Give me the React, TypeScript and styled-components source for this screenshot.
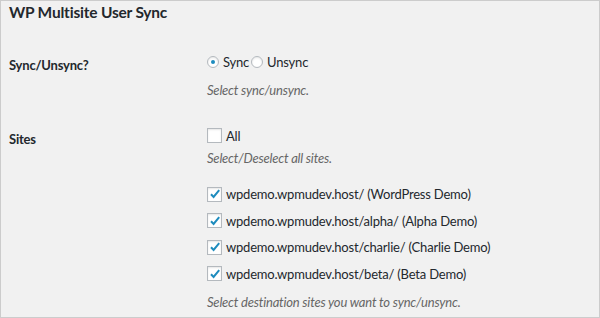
import React from 'react';
import styled, { createGlobalStyle } from 'styled-components';

const GlobalStyle = createGlobalStyle`
	html, body {
		margin: 0;
		padding: 0;
		background: #f1f1f1;
	}
	* {
		box-sizing: border-box;
	}
`;

const SITES = [
	{ url: 'wpdemo.wpmudev.host/', name: 'WordPress Demo' },
	{ url: 'wpdemo.wpmudev.host/alpha/', name: 'Alpha Demo' },
	{ url: 'wpdemo.wpmudev.host/charlie/', name: 'Charlie Demo' },
	{ url: 'wpdemo.wpmudev.host/beta/', name: 'Beta Demo' },
];

const CheckMark = () => (
	<svg width="12" height="12" viewBox="0 0 12 12">
		<path d="M2 6.2 L4.6 9 L10.2 2.2" fill="none" stroke="#1e8cbe" strokeWidth="2" />
	</svg>
);

const App = () => (
	<>
		<GlobalStyle />
		<Frame>
			<Title>WP Multisite User Sync</Title>
			<FormRow top={30}>
				<Label>Sync/Unsync?</Label>
				<Field>
					<Inline>
						<Option>
							<Radio checked />
							Sync
						</Option>
						<Option>
							<Radio />
							Unsync
						</Option>
					</Inline>
					<Description gap={8}>Select sync/unsync.</Description>
				</Field>
			</FormRow>
			<FormRow top={25.5}>
				<Label>Sites</Label>
				<Field>
					<Option>
						<Checkbox />
						All
					</Option>
					<Description gap={2}>Select/Deselect all sites.</Description>
					<SiteList>
						{SITES.map((site) => (
							<SiteItem key={site.url}>
								<Checkbox>
									<CheckMark />
								</Checkbox>
								{site.url} ({site.name})
							</SiteItem>
						))}
					</SiteList>
					<Description gap={8.5}>Select destination sites you want to sync/unsync.</Description>
				</Field>
			</FormRow>
		</Frame>
	</>
);

const Frame = styled.div`
	width: 600px;
	height: 318px;
	border: 1px solid #cccccc;
	background: #f1f1f1;
	padding: 1px 8px 0;
	font-family: Lato, 'Liberation Sans', sans-serif;
	font-size: 13px;
	letter-spacing: -0.2px;
	line-height: 20px;
	color: #23282d;
	overflow: hidden;
`;

const Title = styled.h2`
	margin: 0;
	font-size: 15.5px;
	font-weight: 700;
	letter-spacing: -0.2px;
	line-height: 20px;
	color: #23282d;
`;

const FormRow = styled.div<{ top: number }>`
	display: grid;
	grid-template-columns: 198px 1fr;
	margin-top: ${(props) => props.top}px;
`;

const Label = styled.div`
	font-weight: 700;
	padding-top: 3px;
`;

const Field = styled.div`
	display: flex;
	flex-direction: column;
`;

const Inline = styled.div`
	display: flex;
	gap: 2px;
`;

const Option = styled.label`
	display: flex;
	align-items: center;
	gap: 4px;
	height: 20px;
`;

const Radio = styled.span<{ checked?: boolean }>`
	position: relative;
	width: 12px;
	height: 12px;
	border-radius: 50%;
	border: 1px solid #b4b9be;
	background: #fff;
	box-shadow: inset 0 1px 2px rgba(0, 0, 0, 0.1);
	&::after {
		content: '';
		display: ${(props) => (props.checked ? 'block' : 'none')};
		position: absolute;
		left: 3px;
		top: 3px;
		width: 4px;
		height: 4px;
		border-radius: 50%;
		background: #1e8cbe;
	}
`;

const Checkbox = styled.span`
	display: flex;
	align-items: center;
	justify-content: center;
	width: 15px;
	height: 15px;
	border: 1px solid #b4b9be;
	background: #fff;
	box-shadow: inset 0 1px 2px rgba(0, 0, 0, 0.1);
`;

const Description = styled.p<{ gap: number }>`
	margin: ${(props) => props.gap}px 0 0;
	font-style: italic;
	color: #666666;
`;

const SiteList = styled.div`
	display: flex;
	flex-direction: column;
	gap: 6.5px;
	margin-top: 16.5px;
`;

const SiteItem = styled(Option)``;

export default App;
